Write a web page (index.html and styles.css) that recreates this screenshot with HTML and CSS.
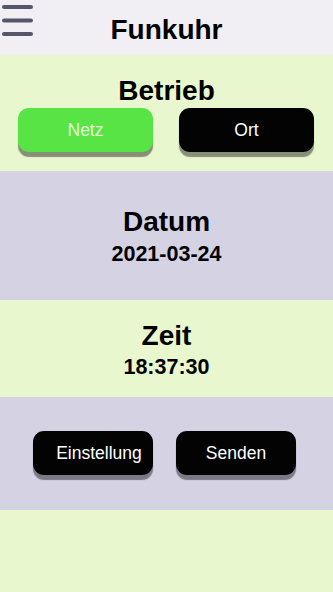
FILE: index.html
```html
<!DOCTYPE html>
<html lang="de">
<head>
<meta charset="utf-8">
<title>Funkuhr</title>
<link rel="stylesheet" href="styles.css">
</head>
<body>
<div class="app">
  <header class="topbar">
    <svg class="menu" width="36" height="40" viewBox="0 0 36 40">
      <line x1="4" y1="7" x2="31" y2="7"/>
      <line x1="4" y1="20.5" x2="31" y2="20.5"/>
      <line x1="4" y1="34" x2="31" y2="34"/>
    </svg>
    <h1 class="title">Funkuhr</h1>
  </header>
  <section class="band green mode">
    <h2 class="heading">Betrieb</h2>
    <div class="row mode-row">
      <button class="btn btn-green">Netz</button>
      <button class="btn btn-black">Ort</button>
    </div>
  </section>
  <section class="band lavender date">
    <h2 class="heading">Datum</h2>
    <div class="value">2021-03-24</div>
  </section>
  <section class="band green time">
    <h2 class="heading">Zeit</h2>
    <div class="value">18:37:30</div>
  </section>
  <section class="band lavender actions">
    <div class="row action-row">
      <button class="btn btn-black btn-small btn-settings">Einstellung</button>
      <button class="btn btn-black btn-small">Senden</button>
    </div>
  </section>
  <section class="band green filler"></section>
</div>
</body>
</html>
```

FILE: styles.css
```css
* { box-sizing: border-box; }
html, body { margin: 0; padding: 0; }
body {
  font-family: "Liberation Sans", Arial, sans-serif;
  background: #e8f7cd;
  color: #000;
}
.app {
  display: flex;
  flex-direction: column;
  width: 333px;
  height: 592px;
  overflow: hidden;
}
.topbar {
  position: relative;
  height: 55px;
  flex: 0 0 55px;
  background: #f1eff4;
  display: flex;
  align-items: center;
  justify-content: center;
}
.menu {
  position: absolute;
  left: 0;
  top: 0;
}
.menu line {
  stroke: #56566a;
  stroke-width: 4;
  stroke-linecap: round;
}
.title {
  margin: 0;
  font-size: 28px;
  line-height: 32px;
  font-weight: bold;
  padding-top: 5px;
}
.band {
  display: flex;
  flex-direction: column;
  align-items: center;
}
.green { background: #e8f7cd; }
.lavender { background: #d4d2e3; }
.heading {
  margin: 0;
  font-size: 28px;
  line-height: 32px;
  font-weight: bold;
}
.value {
  font-size: 21.5px;
  line-height: 24px;
  font-weight: bold;
}
.mode { flex: 0 0 116px; padding-top: 20px; }
.date { flex: 0 0 129px; padding-top: 35px; }
.date .value { margin-top: 4px; }
.time { flex: 0 0 97px; padding-top: 20px; }
.time .value { margin-top: 3px; }
.actions { flex: 0 0 113px; padding-top: 34px; }
.filler { flex: 1 1 auto; }
.row {
  display: flex;
  justify-content: center;
  width: 100%;
}
.mode-row { gap: 26px; margin-top: 1px; padding-right: 1px; }
.action-row { gap: 23px; padding-right: 4px; }
.btn {
  font-family: "Liberation Sans", Arial, sans-serif;
  font-size: 17.5px;
  border: none;
  border-radius: 11px;
  height: 44px;
  width: 135px;
  padding: 0;
  color: #fff;
  box-shadow: 0 5px 1px rgba(0, 0, 0, 0.42);
}
.btn-green { background: #58e444; color: #e4f6dc; }
.btn-black { background: #030304; }
.btn-small { width: 120px; }
.btn-settings { padding-left: 12px; }
```
